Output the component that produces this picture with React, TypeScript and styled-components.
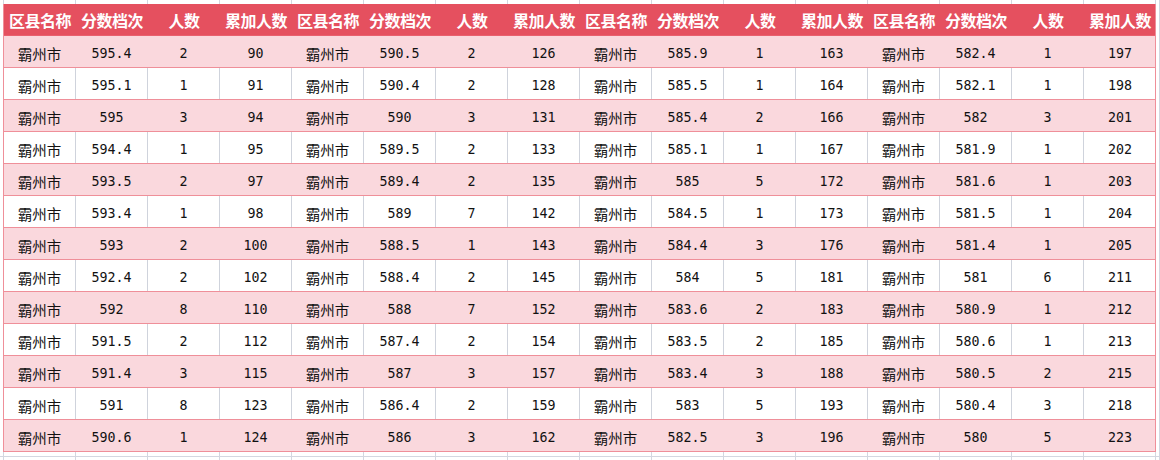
import * as React from 'react'
import styled, { createGlobalStyle } from 'styled-components'

const GlobalStyle = createGlobalStyle`
  html, body {
    margin: 0;
    padding: 0;
    background: #ffffff;
  }
`

const Sheet = styled.div`
  width: 1160px;
  height: 460px;
  box-sizing: border-box;
  padding: 4px 0 0 3px;
  overflow: hidden;
  border-right: 1px solid #d3d7e0;
  background-image: repeating-linear-gradient(
    to right,
    #d3d7e0 0,
    #d3d7e0 1px,
    transparent 1px,
    transparent 72px
  );
  background-position: 3px 0;
`

const Table = styled.div`
  width: 1153px;
  border-left: 1px solid #ef8f99;
  border-right: 1px solid #ef8f99;
  box-sizing: border-box;
`

const Row = styled.div<{ $tone: 'head' | 'pink' | 'white' }>`
  display: grid;
  grid-template-columns: repeat(16, 72px);
  height: 32px;
  box-sizing: border-box;
  border-bottom: 1px solid ${p => (p.$tone === 'head' ? '#e9606e' : '#ef8f99')};
  background: ${p =>
    p.$tone === 'head' ? '#e5505f' : p.$tone === 'pink' ? '#fad8dd' : '#ffffff'};
`

const HeadCell = styled.div`
  display: flex;
  align-items: center;
  justify-content: center;
  font-family: 'Noto Sans CJK SC', sans-serif;
  font-weight: 700;
  font-size: 16px;
  color: #ffffff;
  white-space: nowrap;
  letter-spacing: -0.5px;
`

const Cell = styled.div<{ $cjk?: boolean; $grid: boolean }>`
  display: flex;
  align-items: center;
  justify-content: center;
  box-sizing: border-box;
  padding-top: 3px;
  border-right: 1px solid ${p => (p.$grid ? '#cfd3dc' : 'transparent')};
  color: #111111;
  white-space: nowrap;
  font-family: ${p =>
    p.$cjk ? "'Noto Sans CJK SC', sans-serif" : "'DejaVu Sans Mono', monospace"};
  font-size: ${p => (p.$cjk ? '14.5px' : '13.3px')};

  &:last-child {
    border-right: none;
  }
`

const BottomStrip = styled.div`
  height: 4px;
  margin-left: -3px;
  border-bottom: 1px solid #d3d7e0;
`

const heads = ['区县名称', '分数档次', '人数', '累加人数']

// [分数档次, 人数, 累加人数] per group, 13 rows each
const groups: [string, number, number][][] = [
  [
    ['595.4', 2, 90], ['595.1', 1, 91], ['595', 3, 94], ['594.4', 1, 95],
    ['593.5', 2, 97], ['593.4', 1, 98], ['593', 2, 100], ['592.4', 2, 102],
    ['592', 8, 110], ['591.5', 2, 112], ['591.4', 3, 115], ['591', 8, 123],
    ['590.6', 1, 124],
  ],
  [
    ['590.5', 2, 126], ['590.4', 2, 128], ['590', 3, 131], ['589.5', 2, 133],
    ['589.4', 2, 135], ['589', 7, 142], ['588.5', 1, 143], ['588.4', 2, 145],
    ['588', 7, 152], ['587.4', 2, 154], ['587', 3, 157], ['586.4', 2, 159],
    ['586', 3, 162],
  ],
  [
    ['585.9', 1, 163], ['585.5', 1, 164], ['585.4', 2, 166], ['585.1', 1, 167],
    ['585', 5, 172], ['584.5', 1, 173], ['584.4', 3, 176], ['584', 5, 181],
    ['583.6', 2, 183], ['583.5', 2, 185], ['583.4', 3, 188], ['583', 5, 193],
    ['582.5', 3, 196],
  ],
  [
    ['582.4', 1, 197], ['582.1', 1, 198], ['582', 3, 201], ['581.9', 1, 202],
    ['581.6', 1, 203], ['581.5', 1, 204], ['581.4', 1, 205], ['581', 6, 211],
    ['580.9', 1, 212], ['580.6', 1, 213], ['580.5', 2, 215], ['580.4', 3, 218],
    ['580', 5, 223],
  ],
]

const App = () => (
  <>
    <GlobalStyle />
    <Sheet>
      <Table>
        <Row $tone="head">
          {groups.map((_, g) =>
            heads.map(h => <HeadCell key={`${g}-${h}`}>{h}</HeadCell>)
          )}
        </Row>
        {groups[0].map((_, r) => {
          const pink = r % 2 === 0
          return (
            <Row key={r} $tone={pink ? 'pink' : 'white'}>
              {groups.map((grp, g) => {
                const [score, count, total] = grp[r]
                return (
                  <React.Fragment key={g}>
                    <Cell $cjk $grid={!pink}>霸州市</Cell>
                    <Cell $grid={!pink}>{score}</Cell>
                    <Cell $grid={!pink}>{count}</Cell>
                    <Cell $grid={!pink}>{total}</Cell>
                  </React.Fragment>
                )
              })}
            </Row>
          )
        })}
      </Table>
      <BottomStrip />
    </Sheet>
  </>
)

export default App
